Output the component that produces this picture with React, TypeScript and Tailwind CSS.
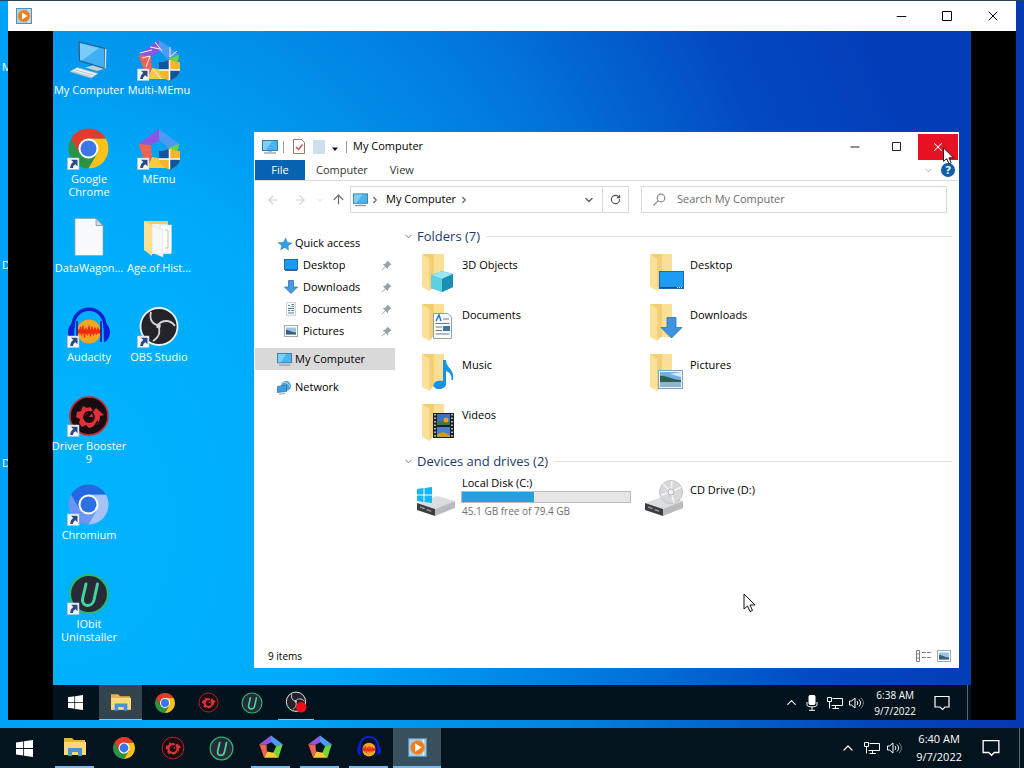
import React from "react";
import {
  ArrowLeft,
  ArrowRight,
  ArrowUp,
  ChevronDown,
  ChevronRight,
  ChevronUp,
  Minus,
  RotateCw,
  X,
} from "lucide-react";

type IconProps = { className?: string };

const WindowsLogo = ({ className = "" }: IconProps) => (
  <svg viewBox="0 0 16 16" className={className} fill="currentColor">
    <path d="M0 2.3 6.8 1.3V7.6H0zM7.6 1.2 16 0v7.6H7.6zM0 8.4h6.8v6.3L0 13.7zM7.6 8.4H16V16l-8.4-1.2z" />
  </svg>
);

const MaximizeIcon = ({ className = "" }: IconProps) => (
  <svg viewBox="0 0 10 10" className={className} fill="none" stroke="currentColor">
    <path d="M0.500 0.500h9v9h-9z" />
  </svg>
);

const PlayerIcon = ({ className = "" }: IconProps) => (
  <svg viewBox="0 0 16 16" className={className}>
    <rect x="0.5" y="0.5" width="15" height="15" fill="#a9d3ec" stroke="#5590b8" />
    <path d="M13 1v14" stroke="#e4f4fd" />
    <circle cx="8" cy="8" r="6" fill="#ee7d1a" stroke="#d9a880" strokeWidth="0.6" />
    <path d="M6 4.5 11.5 8 6 11.5z" fill="#fff" />
  </svg>
);

const ShortcutArrow = () => (
  <g>
    <rect x="-0.5" y="30" width="11.5" height="11.5" fill="#f4f8fb" stroke="#b9c6d2" strokeWidth="0.6" />
    <path d="M3 31.8h6.5v6.5L7.4 36.2C5.8 37 5.2 38.2 5 40H2.2c.2-2.800 1.300-4.700 3.100-5.900z" fill="#2a4a80" />
  </g>
);

const PcIcon = ({ className = "" }: IconProps) => (
  <svg viewBox="0 0 16 14" className={className}>
    <rect x="0.5" y="0.5" width="15" height="10" fill="#49b4ee" stroke="#3a7ba6" />
    <path d="M1 1h9L4 10H1z" fill="#7fd0f7" />
    <path d="M2 13h12" stroke="#8098a8" strokeWidth="1.200" />
    <path d="M6 11.500h4" stroke="#b9c6cf" />
  </svg>
);

const DesktopPcIcon = () => (
  <svg viewBox="0 0 42 42" className="size-[42px]">
    <path d="M11 3 37 9.500 36.500 29.500 11.500 21.500z" fill="#3fb0f5" stroke="#2b5d84" strokeWidth="1.200" />
    <path d="M12 4.200 31 9 14 21.500 12 21z" fill="#7ccbf8" />
    <path d="M37 9.500 38.500 10.200 38 29.500 36.500 29.500z" fill="#cfdbe3" />
    <path d="M17 28.500 25 26.500 36 30 29 32z" fill="#c3d1da" />
    <path d="M2 32.500 9 28.500 30 34.500 23 39z" fill="#e9eff3" stroke="#9fb1bd" strokeWidth="0.700" />
    <path d="M5 32.500 23 37.500M7.500 31 25.500 36" stroke="#a3b4bf" strokeWidth="0.700" />
  </svg>
);

const ChromeMark = ({ blue = false }: { blue?: boolean }) => (
  <g>
    <path d="M24 44A20 20 0 0 1 6.700 14L15.300 29H32.700z" fill={blue ? "#6a95f3" : "#2a9444"} />
    <path d="M41.300 14A20 20 0 0 1 24 44L32.700 29 24 14z" fill={blue ? "#a5c3f9" : "#fbc116"} />
    <path d="M6.700 14A20 20 0 0 1 41.300 14H24L15.300 29z" fill={blue ? "#2368df" : "#e23a2c"} />
    <circle cx="24" cy="24" r="10" fill="#fff" />
    <circle cx="24" cy="24" r="8" fill={blue ? "#2a72e4" : "#3a76e8"} />
  </g>
);

const ChromeIcon = ({ className = "" }: IconProps) => (
  <svg viewBox="4 4 40 40" className={className}>
    <ChromeMark />
  </svg>
);

const MemuMark = () => (
  <g>
    <path d="M21 1 0.500 16 13 17 23 12z" fill="#8b56e0" />
    <path d="M21 1 41.500 16 31 21 21 12z" fill="#4c9af4" />
    <path d="M41.500 16 34 40 25 31 30 20z" fill="#6fd63a" />
    <path d="M34 40H9L14 29 26 31z" fill="#f6cb3a" />
    <path d="M9 40 0.500 16 13 17 14 29z" fill="#ef6356" />
  </g>
);

const MemuIcon = ({ className = "" }: IconProps) => (
  <svg viewBox="0 0 42 42" className={className}>
    <MemuMark />
  </svg>
);

const Shield = () => (
  <g>
    <path d="M31.500 20C35 22.500 38 23 42 23V31C42 36 37 39.500 31.500 42 26 39.500 21 36 21 31V23C25 23 28 22.500 31.500 20z" fill="#f5b52b" />
    <path d="M31.500 20V31H21V23C25 23 28 22.500 31.500 20zM31.500 31H42C42 36 37 39.500 31.500 42z" fill="#10569c" />
    <path d="M31.500 21V41M21 31H42" stroke="#fff" strokeWidth="1.500" />
  </g>
);

const FileIcon = () => (
  <svg viewBox="0 0 42 42" className="size-[42px]">
    <path d="M7 1.500H28L35 8.500V38.500H7z" fill="#f8f9fa" stroke="#94a2ac" strokeWidth="0.700" />
    <path d="M28 1.500V8.500H35z" fill="#cfdae2" stroke="#6f8796" strokeWidth="0.700" />
  </svg>
);

const OpenFolderIcon = () => (
  <svg viewBox="0 0 42 42" className="size-[42px]">
    <path d="M6 4H30V36H12L6 33z" fill="#eecb6d" />
    <path d="M14 7H28L33 9V37H14z" fill="#f4f5f5" />
    <path d="M22 8H33.500V36H22z" fill="#fff" stroke="#c9d0d4" strokeWidth="0.600" />
    <path d="M27 13h3v18h-3" stroke="#9aa6ad" strokeWidth="0.700" fill="none" />
    <path d="M14 9 25 13V40L14 35.500z" fill="#f5f8f9" stroke="#dde0e0" strokeWidth="0.600" />
    <path d="M6 4 14 8V39L6 33z" fill="#fbdf93" />
  </svg>
);

const AudacityMark = () => (
  <g>
    <circle cx="21" cy="25.500" r="12" fill="#f3a625" />
    <path
      d="M9.500 25.500h2l1-5 1 9 1.500-10 1.500 12 1.500-10 1.500 8 1.500-10 1.500 11 1.500-10 1.500 9 1.500-8 1.500 7 1.500-6 1 3h1.500"
      stroke="#ee2b12"
      strokeWidth="1.200"
      fill="none"
    />
    <path d="M9.500 25.500H33" stroke="#ee2b12" strokeWidth="4" />
    <path d="M5 22C4 -3 38 -3 37 22" stroke="#0a22cf" strokeWidth="3.500" fill="none" />
    <path d="M6.500 16C-2 19-2 33 6 36.500zM35.500 16C44 19 44 33 36 36.500z" fill="#0b1fd6" />
    <path d="M9 15V36M33 15V36" stroke="#0a18a0" strokeWidth="1.500" />
  </g>
);

const ObsMark = () => (
  <g>
    <circle cx="21" cy="20.500" r="18.500" fill="#25232a" stroke="#eef1f4" strokeWidth="1.800" />
    <g fill="none" stroke="#d3d5da" strokeWidth="1.800">
      <path d="M13 6C11 14 15 19 21 19" />
      <path d="M20 19C24 14 32 13 37 20" />
      <path d="M20 18C22 24 23 30 15 35" />
      <circle cx="20.500" cy="20" r="1.500" />
    </g>
  </g>
);

const BoosterMark = () => (
  <g>
    <circle cx="21" cy="21" r="19" fill="#170d10" stroke="#d6222c" strokeWidth="1.600" />
    <path
      d="M15 11l4 2 3-1 3 3-4 3c-4 1-6 5-3 8 3 2 7 0 7-4l-4 0 7-9 8 7-4 1c0 6-3 10-8 11l-3 1-3-3-4 2-3-4 1-4-4-2 1-5 4-1z"
      fill="#e2303a"
    />
    <circle cx="21" cy="22" r="5" fill="none" stroke="#170d10" strokeWidth="1.800" />
    <path d="M24 35l6-9" stroke="#170d10" strokeWidth="1.500" />
  </g>
);

const UninstallerMark = () => (
  <g>
    <circle cx="21" cy="21" r="19" fill="#272b38" stroke="#30b673" strokeWidth="2.200" />
    <path d="M18 11 14.500 26C13.500 34 24 35 26 27L29.500 11" stroke="#45d39b" strokeWidth="3" fill="none" strokeLinecap="round" />
  </g>
);

const Shortcut = ({ children }: { children: React.ReactNode }) => (
  <svg viewBox="0 0 42 42" className="size-[42px] overflow-visible">
    {children}
    <ShortcutArrow />
  </svg>
);

const ChromeShortcut = ({ blue = false }: { blue?: boolean }) => (
  <Shortcut>
    <g transform="translate(-3.500 -3.500)">
      <ChromeMark blue={blue} />
    </g>
  </Shortcut>
);

const MemuShortcut = ({ multi = false }: { multi?: boolean }) => (
  <Shortcut>
    <MemuMark />
    {multi && (
      <path
        d="M17 3 24 12M2 14 14 11M4 19 12 17 8 28M32 8V18L39 12M15 30 23 40M12 8 22 10"
        stroke="#f3f4fb"
        strokeWidth="1"
        fill="none"
      />
    )}
    <Shield />
  </Shortcut>
);

const desktopIcons = [
  { lines: ["My Computer"], icon: <DesktopPcIcon /> },
  { lines: ["Google", "Chrome"], icon: <ChromeShortcut /> },
  { lines: ["DataWagon..."], icon: <FileIcon /> },
  { lines: ["Audacity"], icon: <Shortcut><AudacityMark /></Shortcut> },
  { lines: ["Driver Booster", "9"], icon: <Shortcut><BoosterMark /></Shortcut> },
  { lines: ["Chromium"], icon: <ChromeShortcut blue /> },
  { lines: ["IObit", "Uninstaller"], icon: <Shortcut><UninstallerMark /></Shortcut> },
  { lines: ["Multi-MEmu"], icon: <MemuShortcut multi /> },
  { lines: ["MEmu"], icon: <MemuShortcut /> },
  { lines: ["Age.of.Hist..."], icon: <OpenFolderIcon /> },
  { lines: ["OBS Studio"], icon: <Shortcut><ObsMark /></Shortcut> },
];

const ExplorerIcon = ({ className = "" }: IconProps) => (
  <svg viewBox="0 0 22 18" className={className}>
    <path d="M0 0H8L10 2H21V17H0z" fill="#e9b23c" />
    <path d="M0 4H22V17H0z" fill="#fbd87a" />
    <path d="M4 10H18V18H14V14H8V18H4z" fill="#4394cf" />
  </svg>
);

const StarIcon = () => (
  <svg viewBox="0 0 16 16" className="size-[14px]">
    <path d="M9 1 10.500 6 16 7 11.500 10 12 15 8 12 3 14.500 4.500 10 0 6.500 6 6z" fill="#2f9fe2" stroke="#1e7bb8" strokeWidth="0.500" />
  </svg>
);

const ScreenIcon = () => (
  <svg viewBox="0 0 14 12" className="h-[12px] w-[14px]">
    <rect x="0.500" y="0.500" width="13" height="10" fill="#1a9bf0" stroke="#1c6fae" />
    <path d="M1 11.500h12" stroke="#33668c" />
  </svg>
);

const DownIcon = () => (
  <svg viewBox="0 0 14 14" className="size-[14px]">
    <path d="M4.500 0.500h5V7h4L7 13.500 0.500 7h4z" fill="#4a97e2" stroke="#2f74c0" strokeWidth="0.800" />
  </svg>
);

const DocIcon = () => (
  <svg viewBox="0 0 14 14" className="size-[14px]">
    <path d="M2.500 0.500h9v13h-9z" fill="#f8fbfc" stroke="#b4c2ca" strokeWidth="0.700" />
    <path d="M4 3.500h2M7.500 2.500H10M7.500 4.500H10M4 6.500h6M4 8.500h2M7.500 8.500H10M4 11h6" stroke="#4c7f98" />
  </svg>
);

const PicIcon = () => (
  <svg viewBox="0 0 14 12" className="h-[12px] w-[14px]">
    <rect x="0.500" y="0.500" width="13" height="11" fill="#fff" stroke="#9babb8" />
    <path d="M2 2.500h10v7H2z" fill="#9cc4e2" />
    <path d="M2 5c3 0 5 2 10 2.500v2H2z" fill="#3d5f78" />
  </svg>
);

const NetworkIcon = () => (
  <svg viewBox="0 0 15 15" className="size-[15px]">
    <circle cx="9" cy="6" r="5" fill="#4fa4d8" />
    <path d="M6 2c3 1 6 1 7 5" stroke="#bfe0f3" fill="none" />
    <path d="M0.500 6.500 9.500 5v6.500l-9 1z" fill="#3a9fe4" stroke="#2c6f9f" strokeWidth="0.700" />
    <path d="M2 14.300 8 13.500" stroke="#8fa3b0" />
  </svg>
);

const PinIcon = () => (
  <svg viewBox="0 0 12 12" className="size-[11px]">
    <path d="M7 0.500 11.500 5 10 5.500 8 7.500 7.500 10 5 7.500 1 11.500 0.500 11 4.500 7 2 4.500 4.500 4 6.500 2z" fill="#97a1a9" />
  </svg>
);

const SearchIcon = () => (
  <svg viewBox="0 0 13 13" className="size-[13px]" fill="none" stroke="#8c8c8c" strokeWidth="1.200">
    <circle cx="8" cy="5" r="3.800" />
    <path d="M5.300 7.700 0.500 12.500" />
  </svg>
);

const quickLinks = [
  { label: "Desktop", icon: <ScreenIcon /> },
  { label: "Downloads", icon: <DownIcon /> },
  { label: "Documents", icon: <DocIcon /> },
  { label: "Pictures", icon: <PicIcon /> },
];

const Folder = ({ children }: { children: React.ReactNode }) => (
  <svg viewBox="0 0 42 44" className="h-[44px] w-[42px] shrink-0">
    <path d="M7 3H29V36H13z" fill="#f4cf70" />
    <path d="M19 3H29V36H19z" fill="#fadf97" />
    <path d="M7 3 14.500 8V40L7 36z" fill="#fbe09a" />
    <path d="M14.500 8V40L17 37V13z" fill="#f1cf7c" />
    {children}
  </svg>
);

const folders = [
  {
    label: "3D Objects",
    overlay: (
      <g>
        <path d="M27 20 38 23V36L27 41 16 37V24z" fill="#35b4d2" />
        <path d="M27 20 38 23 27 28 16 24z" fill="#9be6f0" />
        <path d="M27 28 38 23V36L27 41z" fill="#1890b4" />
        <path d="M16 24 27 28V41L16 37z" fill="#5fd0e2" />
      </g>
    ),
  },
  {
    label: "Desktop",
    overlay: (
      <g>
        <rect x="16.500" y="20.500" width="24" height="17" fill="#1c9cf5" stroke="#1f6aa5" />
        <path d="M17 36.500H40" stroke="#17507e" />
        <path d="M34 36.500h5" stroke="#fff" strokeDasharray="1 1" />
      </g>
    ),
  },
  {
    label: "Documents",
    overlay: (
      <g>
        <path d="M18.500 12.500H33L36.500 16V37.500H18.500z" fill="#fdfdfe" stroke="#6f8fa3" strokeWidth="0.800" />
        <path d="M21 20 24 14 26 20" stroke="#2479b4" strokeWidth="1.500" fill="none" />
        <path d="M28 18H34M20.500 22.500H34.500M20.500 26H27M20.500 29.500H27M20.500 33H34.500" stroke="#607c8c" />
        <path d="M28 25H35V30H28z" fill="#3b79a0" />
      </g>
    ),
  },
  {
    label: "Downloads",
    overlay: <path d="M24 16.500H33V26.500H39L28.500 37 18 26.500H24z" fill="#3f93e0" stroke="#2b70b7" strokeWidth="0.800" />,
  },
  {
    label: "Music",
    overlay: <path d="M28 9H31C31 17 40 18 38 29H36.500C37 23 34 21 31 20V33C31 39 19 40 18.500 34.500 18.500 30 24 29 28 30z" fill="#1492e6" />,
  },
  {
    label: "Pictures",
    overlay: (
      <g>
        <rect x="15.500" y="19.500" width="24" height="18" fill="#eef5fa" stroke="#7fa2bd" />
        <path d="M17 21H38V36H17z" fill="#6fb0e4" />
        <path d="M17 25C24 24 28 29 38 29V32H17z" fill="#335f50" />
        <path d="M17 31H38V36H17z" fill="#8fb6cd" />
        <path d="M27 23 38 21V26z" fill="#dcecf6" />
      </g>
    ),
  },
  {
    label: "Videos",
    overlay: (
      <g>
        <rect x="18" y="12" width="21" height="25" fill="#1b2028" />
        <path d="M22 13H35V24H22z" fill="#3d6fc4" />
        <path d="M22 26H35V36H22z" fill="#4b7fd2" />
        <path d="M22 20 26 21 30 18 35 22V24H22z" fill="#3f7a36" />
        <circle cx="31" cy="19" r="2.500" fill="#e8a124" />
        <path d="M22 33 28 31 35 34V36H22z" fill="#c79a2c" />
        <path d="M20 13V37M37 13V37" stroke="#e6eaf0" strokeWidth="1.500" strokeDasharray="1.500 2" />
      </g>
    ),
  },
];

const DriveBody = () => (
  <g>
    <path d="M2 28 22 21 40 26 20 34z" fill="#dcdddf" />
    <path d="M20 34 40 26V33L20 41z" fill="#b9bbbe" />
    <path d="M2 28 20 34V41L2 35z" fill="#3b3e41" />
    <path d="M5 32 17 36.500" stroke="#8b9094" strokeWidth="1.500" strokeDasharray="5 2" />
  </g>
);

const SectionHeader = ({ title }: { title: string }) => (
  <h2 className="flex h-[21px] items-center text-[13px] text-[#1e3a66]">
    <ChevronDown className="mr-[3px] size-[11px] text-[#6b7280]" strokeWidth={2} />
    {title}
    <span className="ml-[6px] h-px flex-1 bg-[#e0e2e4]" />
  </h2>
);

const Pointer = ({ className = "" }: IconProps) => (
  <svg viewBox="0 0 13 20" className={className}>
    <path d="M1 1V16L4.500 13 7 18.500 9.500 17.500 7 12H12z" fill="#fff" stroke="#111" strokeWidth="1" />
  </svg>
);

const DetailsViewIcon = () => (
  <svg viewBox="0 0 16 12" className="h-[12px] w-[16px]" fill="none" stroke="#7a8288">
    <path d="M0.500 0.500h3v11h-3zM0.500 4h3M0.500 8h3" />
    <path d="M6 2.500h4M11 2.500h4M6 7.500h4M11 7.500h4" />
  </svg>
);

const ExplorerWindow = () => (
  <section className="relative mb-[17px] mr-[12px] mt-[101px] flex flex-1 flex-col bg-white p-px text-[11px] text-black">
    <header className="flex h-[27px] items-center">
      <PcIcon className="ml-[7px] h-[14px] w-[16px]" />
      <span className="ml-[5px] h-[12px] w-px bg-[#9a9a9a]" />
      <svg viewBox="0 0 12 15" className="ml-[9px] h-[15px] w-[12px]" fill="none">
        <path d="M0.500 0.500H8.500L11.500 3.500V14.500H0.500z" fill="#fdfdfd" stroke="#98796e" />
        <path d="M3 8 5.500 10.500 9.500 5.500" stroke="#c0524a" strokeWidth="1.400" />
      </svg>
      <span className="ml-[8px] h-[14px] w-[12px] bg-[#cfe0ec]" />
      <svg viewBox="0 0 6 4" className="ml-[7px] mt-[4px] h-[4px] w-[6px]">
        <path d="M0 0.500H6L3 4z" fill="#111" />
      </svg>
      <span className="ml-[8px] h-[12px] w-px bg-[#9a9a9a]" />
      <h1 className="ml-[6px] flex-1">My Computer</h1>
      <button aria-label="Minimize" className="flex h-[26px] w-[41px] items-center justify-center">
        <Minus className="size-[14px]" strokeWidth={1.5} />
      </button>
      <button aria-label="Maximize" className="flex h-[26px] w-[43px] items-center justify-center">
        <MaximizeIcon className="size-[9px]" />
      </button>
      <button aria-label="Close" className="flex h-[26px] w-[40px] items-center justify-center bg-[#e81123] text-white">
        <X className="size-[14px]" strokeWidth={1.8} />
      </button>
    </header>

    <nav className="flex h-[21px] items-stretch border-b border-[#dadbdc] text-[#333]">
      <button className="w-[50px] bg-[#0563b1] text-white">File</button>
      <button className="px-[11px]">Computer</button>
      <button className="px-[11px]">View</button>
      <button aria-label="Expand ribbon" className="ml-auto text-[#a8adb2]">
        <ChevronDown className="size-[11px]" />
      </button>
      <button
        aria-label="Help"
        className="ml-[7px] mr-[3px] flex size-[14px] items-center justify-center self-center rounded-full bg-[#0e5fa8] text-[11px] font-bold text-white"
      >
        ?
      </button>
    </nav>

    <div className="mr-[11px] mt-[5px] flex h-[27px] items-center">
      <div className="flex w-[95px] items-center pl-[11px]">
        <button aria-label="Back"><ArrowLeft className="size-[14px] text-[#d0d3d6]" /></button>
        <button aria-label="Forward" className="ml-[13px]"><ArrowRight className="size-[14px] text-[#d0d3d6]" /></button>
        <button aria-label="Recent locations" className="ml-[9px]"><ChevronDown className="size-[8px] text-[#d0d3d6]" /></button>
        <button aria-label="Up" className="ml-[7px]"><ArrowUp className="size-[15px] text-[#6a6f75]" /></button>
      </div>
      <div className="flex h-full flex-1 items-center border border-[#d9d9d9]">
        <PcIcon className="ml-[2px] h-[14px] w-[15px]" />
        <ChevronRight className="ml-[2px] size-[10px] text-[#666]" strokeWidth={3} />
        <button className="ml-[6px] mr-[3px]">My Computer</button>
        <ChevronRight className="size-[10px] text-[#666]" strokeWidth={3} />
        <button aria-label="Previous locations" className="ml-auto mr-[7px]">
          <ChevronDown className="size-[12px] text-[#666]" strokeWidth={3} />
        </button>
        <button aria-label="Refresh" className="flex h-full w-[26px] items-center justify-center border-l border-[#d9d9d9]">
          <RotateCw className="size-[11px] text-[#555]" strokeWidth={2.5} />
        </button>
      </div>
      <label className="ml-[12px] flex h-full w-[306px] items-center border border-[#d9d9d9] pl-[11px]">
        <SearchIcon />
        <input
          type="text"
          aria-label="Search"
          placeholder="Search My Computer"
          className="ml-[11px] min-w-0 flex-1 bg-transparent outline-none placeholder:text-[#6d6d6d]"
        />
      </label>
    </div>

    <div className="flex flex-1 pt-[12px]">
      <aside className="w-[140px] pt-[8px]">
        <a href="#quick" className="flex h-[21px] items-center gap-[3px] pl-[23px]">
          <StarIcon />
          Quick access
        </a>
        {quickLinks.map((link) => (
          <a key={link.label} href="#link" className="flex h-[22px] items-center pl-[29px] pr-[3px]">
            {link.icon}
            <span className="ml-[5px] flex-1">{link.label}</span>
            <PinIcon />
          </a>
        ))}
        <a href="#computer" className="mt-[6px] flex h-[22px] items-center gap-[3px] bg-[#d9d9d9] pl-[22px]">
          <PcIcon className="h-[13px] w-[15px]" />
          My Computer
        </a>
        <a href="#network" className="mt-[6px] flex h-[22px] items-center gap-[3px] pl-[22px]">
          <NetworkIcon />
          Network
        </a>
      </aside>

      <main className="flex-1 pl-[8px] pr-[6px] pt-px">
        <SectionHeader title="Folders (7)" />
        <ul className="grid grid-cols-[228px_228px] pl-[12px] pt-[4px]">
          {folders.map((folder) => (
            <li key={folder.label} className="flex h-[50px] gap-[5px]">
              <Folder>{folder.overlay}</Folder>
              <span className="pt-[6px]">{folder.label}</span>
            </li>
          ))}
        </ul>
        <SectionHeader title="Devices and drives (2)" />
        <ul className="grid grid-cols-[228px_228px] pl-[12px] pt-[3px]">
          <li className="flex gap-[4px]">
            <svg viewBox="0 0 42 44" className="h-[44px] w-[42px] shrink-0">
              <DriveBody />
              <path d="M2 14 8.500 13V19.500H2zM9.500 13 17 12V19.500H9.500zM2 20.500H8.500V27L2 26zM9.500 20.500H17V28L9.500 27z" fill="#19b5f0" />
            </svg>
            <div className="w-[170px]">
              <div id="disk-c" className="pl-px leading-[16px]">Local Disk (C:)</div>
              <div role="meter" aria-labelledby="disk-c" aria-valuenow={43} className="h-[12px] border border-[#bcbcbc] bg-[#e6e6e6]">
                <div className="h-full w-[43%] bg-[#26a0da]" />
              </div>
              <div className="pl-px text-[10px] leading-[16px] text-[#6d6d6d]">45.1 GB free of 79.4 GB</div>
            </div>
          </li>
          <li className="flex gap-[5px]">
            <svg viewBox="0 0 42 44" className="h-[44px] w-[42px] shrink-0">
              <DriveBody />
              <circle cx="28" cy="17" r="11.500" fill="#d6d8da" stroke="#c1c4c7" />
              <path d="M28 17 20 9M28 17 38 12M28 17 31 28M28 17 18 20M28 17 29 6" stroke="#f3f4f5" strokeWidth="1.500" />
              <circle cx="28" cy="17" r="3" fill="#f1f2f3" stroke="#b4b7ba" />
            </svg>
            <span className="pt-[7px]">CD Drive (D:)</span>
          </li>
        </ul>
      </main>
    </div>

    <footer className="flex h-[22px] items-center justify-between pl-[13px] pr-[7px] text-[10px]">
      <span>9 items</span>
      <span className="flex items-center gap-[5px]">
        <button aria-label="Details view"><DetailsViewIcon /></button>
        <button aria-label="Large icons view"><PicIcon /></button>
      </span>
    </footer>

    <Pointer className="absolute right-[4px] top-[15px] h-[18px] w-[13px]" />
    <Pointer className="absolute bottom-[55px] right-[203px] h-[20px] w-[13px]" />
  </section>
);

const NetTray = () => (
  <svg viewBox="0 0 16 14" className="h-[14px] w-[16px]" fill="none" stroke="#fff">
    <path d="M5.500 2.500H15.500V9.500H4.500M8.500 10V12.500M5.500 12.500H12M0.500 1.500H4.500V5.500H0.500zM2.500 5.500V12.500" />
  </svg>
);

const SpeakerTray = () => (
  <svg viewBox="0 0 15 14" className="h-[14px] w-[15px]" fill="none" stroke="#fff">
    <path d="M0.500 5H2.500L6 2V12L2.500 9H0.500z" />
    <path d="M8 5C9 6 9 8 8 9M10 3.500C12 5.500 12 8.500 10 10.500" />
    <path d="M12 2C15 5 15 9 12 12" stroke="#7d8a92" />
  </svg>
);

const ActionTray = ({ className = "" }: IconProps) => (
  <svg viewBox="0 0 16 16" className={className} fill="none" stroke="#fff" strokeWidth="1.200">
    <path d="M1 1.500H15V12H11L8.500 14.500 6 12H1z" />
  </svg>
);

const InnerTaskbar = () => (
  <div className="flex h-[35px] items-stretch bg-[#03131d] text-white">
    <button aria-label="Start" className="flex w-[45px] items-center justify-center"><WindowsLogo className="size-[15px]" /></button>
    <button aria-label="File Explorer" className="ml-px flex w-[43px] items-center justify-center border-b border-[#8cc5f0] bg-[#34444f]"><ExplorerIcon className="h-[17px] w-[20px]" /></button>
    <button aria-label="Chrome" className="flex w-[45px] items-center justify-center"><ChromeIcon className="size-[20px]" /></button>
    <button aria-label="Driver Booster" className="flex w-[43px] items-center justify-center"><svg viewBox="0 0 42 42" className="size-[21px]"><BoosterMark /></svg></button>
    <button aria-label="IObit Uninstaller" className="flex w-[44px] items-center justify-center"><svg viewBox="0 0 42 42" className="size-[22px]"><UninstallerMark /></svg></button>
    <button aria-label="OBS" className="mx-[4px] flex w-[36px] items-center justify-center border-b border-[#8cc5f0]">
      <svg viewBox="0 0 42 42" className="size-[22px]">
        <ObsMark />
        <circle cx="31" cy="31" r="10" fill="#f50b14" />
      </svg>
    </button>
    <div className="ml-auto flex items-center">
      <button aria-label="Hidden icons"><ChevronUp className="size-[15px]" strokeWidth={1.8} /></button>
      <svg viewBox="0 0 12 16" className="ml-[7px] h-[16px] w-[12px]" fill="none" stroke="#fff">
        <rect x="3" y="0.500" width="6" height="9" rx="1" fill="#fff" />
        <path d="M1 7V10C1 12.500 11 12.500 11 10V7M6 12V15M3 15.300H9" />
      </svg>
      <span className="ml-[9px]"><NetTray /></span>
      <span className="ml-[6px]"><SpeakerTray /></span>
      <div className="ml-[10px] text-center text-[10px] leading-[16px]">
        <div>6:38 AM</div>
        <div>9/7/2022</div>
      </div>
      <button aria-label="Notifications" className="ml-[18px]"><ActionTray className="size-[16px]" /></button>
      <span className="ml-[17px] h-full w-[4px] border-l border-[#5b6870]" />
    </div>
  </div>
);

const OuterTaskbar = () => (
  <div className="flex h-[40px] items-stretch bg-[#03141e] text-white">
    <button aria-label="Start" className="flex w-[49px] items-center justify-center"><WindowsLogo className="size-[17px]" /></button>
    <button aria-label="File Explorer" className="ml-[6px] mr-[5px] flex w-[39px] items-center justify-center border-b-2 border-[#76b9ed]"><ExplorerIcon className="h-[18px] w-[22px]" /></button>
    <button aria-label="Chrome" className="flex w-[49px] items-center justify-center"><ChromeIcon className="size-[22px]" /></button>
    <button aria-label="Driver Booster" className="flex w-[49px] items-center justify-center"><svg viewBox="0 0 42 42" className="size-[24px]"><BoosterMark /></svg></button>
    <button aria-label="IObit Uninstaller" className="flex w-[49px] items-center justify-center"><svg viewBox="0 0 42 42" className="size-[25px]"><UninstallerMark /></svg></button>
    <button aria-label="Multi-MEmu" className="mx-[5px] flex w-[39px] items-center justify-center border-b-2 border-[#76b9ed]"><MemuIcon className="size-[24px]" /></button>
    <button aria-label="MEmu" className="mx-[5px] flex w-[39px] items-center justify-center border-b-2 border-[#76b9ed]"><MemuIcon className="size-[24px]" /></button>
    <button aria-label="Audacity" className="mx-[5px] flex w-[39px] items-center justify-center border-b-2 border-[#76b9ed]">
      <svg viewBox="0 0 42 42" className="size-[24px]"><AudacityMark /></svg>
    </button>
    <button aria-label="Media Player" className="flex w-[48px] items-center justify-center border-b-2 border-[#76b9ed] bg-[#38505e]"><PlayerIcon className="size-[19px]" /></button>
    <div className="ml-auto flex items-center">
      <button aria-label="Hidden icons"><ChevronUp className="size-[16px]" strokeWidth={1.8} /></button>
      <span className="ml-[8px]"><NetTray /></span>
      <span className="ml-[7px]"><SpeakerTray /></span>
      <div className="ml-[14px] text-center text-[11px] leading-[18px]">
        <div>6:40 AM</div>
        <div>9/7/2022</div>
      </div>
      <button aria-label="Notifications" className="ml-[20px]"><ActionTray className="size-[18px]" /></button>
      <span className="ml-[19px] h-full w-[5px] border-l border-[#5b6870]" />
    </div>
  </div>
);

const App = () => {
  return (
    <div className="flex min-h-screen flex-col border-t border-[#2b4250] bg-[linear-gradient(90deg,#00a2f5_0%,#00a8f7_25%,#0284de_55%,#0346bd_85%,#0339b2_100%)] font-['Open_Sans','Noto_Sans',sans-serif]">
      <div className="mb-[8px] flex flex-1">
        <div className="flex w-[8px] flex-col gap-[180px] overflow-hidden pl-[2px] pt-[57px] text-[11px] leading-[18px] text-white">
          <span>M</span>
          <span>D</span>
          <span>D</span>
        </div>
        <section className="flex flex-1 flex-col">
          <header className="flex h-[30px] items-center bg-white pl-[8px]">
            <PlayerIcon className="size-[16px]" />
            <div className="ml-auto flex text-black">
              <button aria-label="Minimize" className="flex w-[45px] items-center justify-center"><Minus className="size-[15px]" strokeWidth={1.500} /></button>
              <button aria-label="Maximize" className="flex w-[46px] items-center justify-center"><MaximizeIcon className="size-[10px]" /></button>
              <button aria-label="Close" className="flex w-[46px] items-center justify-center"><X className="size-[16px]" strokeWidth={1.500} /></button>
            </div>
          </header>
          <div className="flex flex-1 bg-black px-[45px]">
            <div className="flex flex-1 flex-col">
              <div className="flex flex-1 bg-[radial-gradient(ellipse_100%_170%_at_0%_75%,#00b4ff_0%,#00acfb_30%,#0278dc_62%,#034ac2_84%,#033db8_100%)]">
                <ul className="grid w-[201px] auto-cols-[70px] grid-flow-col grid-rows-[repeat(7,89px)] pl-px pt-[8px]">
                  {desktopIcons.map((item) => (
                    <li key={item.lines[0]} className="flex flex-col items-center whitespace-nowrap text-[11px] leading-[13px] text-white">
                      {item.icon}
                      <span className="flex flex-col items-center pt-[2px]">
                        {item.lines.map((line) => (
                          <span key={line}>{line}</span>
                        ))}
                      </span>
                    </li>
                  ))}
                </ul>
                <ExplorerWindow />
              </div>
              <InnerTaskbar />
            </div>
          </div>
        </section>
        <div className="w-[8px]" />
      </div>
      <OuterTaskbar />
    </div>
  );
};

export default App;
